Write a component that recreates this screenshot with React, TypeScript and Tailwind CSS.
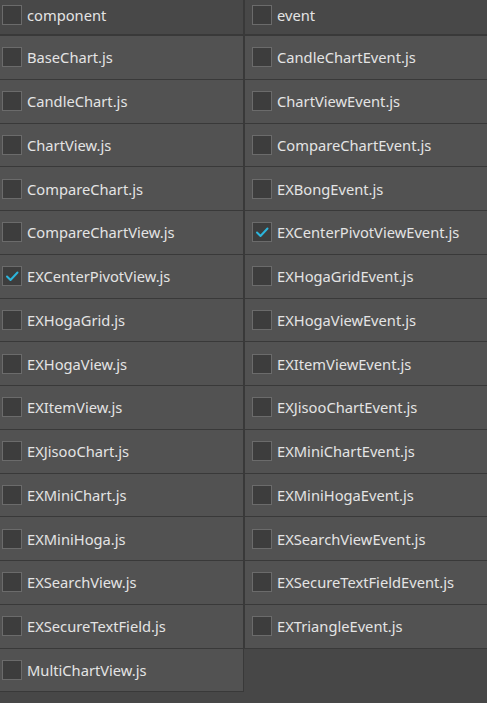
const leftFiles = [
  "BaseChart.js",
  "CandleChart.js",
  "ChartView.js",
  "CompareChart.js",
  "CompareChartView.js",
  "EXCenterPivotView.js",
  "EXHogaGrid.js",
  "EXHogaView.js",
  "EXItemView.js",
  "EXJisooChart.js",
  "EXMiniChart.js",
  "EXMiniHoga.js",
  "EXSearchView.js",
  "EXSecureTextField.js",
  "MultiChartView.js",
];

const rightFiles = [
  "CandleChartEvent.js",
  "ChartViewEvent.js",
  "CompareChartEvent.js",
  "EXBongEvent.js",
  "EXCenterPivotViewEvent.js",
  "EXHogaGridEvent.js",
  "EXHogaViewEvent.js",
  "EXItemViewEvent.js",
  "EXJisooChartEvent.js",
  "EXMiniChartEvent.js",
  "EXMiniHogaEvent.js",
  "EXSearchViewEvent.js",
  "EXSecureTextFieldEvent.js",
  "EXTriangleEvent.js",
];

const checked = new Set(["EXCenterPivotView.js", "EXCenterPivotViewEvent.js"]);

function Box({ on }: { on: boolean }) {
  return (
    <span className="flex h-5 w-5 shrink-0 items-center justify-center border border-[#6b6b6b] bg-[#3d3d3d]">
      {on && (
        <svg width="14" height="14" viewBox="0 0 14 14" fill="none">
          <path
            d="M2 7.5 L5.5 11 L12.5 3.5"
            stroke="#2cb5dc"
            strokeWidth="2"
            strokeLinecap="round"
            strokeLinejoin="round"
          />
        </svg>
      )}
    </span>
  );
}

function Cell({ name, side, head }: { name: string; side: "l" | "r"; head?: boolean }) {
  return (
    <div
      className={`flex items-center gap-[5px] ${
        head ? "h-[36px] border-b-2 bg-[#484848] pb-[4px]" : "h-[43.75px] border-b bg-[#525252]"
      } ${side === "l" ? "border-r pl-[2px]" : "border-l pl-[7px]"} border-[#393939]`}
    >
      <Box on={checked.has(name)} />
      <span className="whitespace-nowrap text-[14.7px] text-[#e4e4e4]">{name}</span>
    </div>
  );
}

export default function App() {
  return (
    <div
      className="flex h-[703px] w-[487px] overflow-hidden bg-[#474747]"
      style={{ fontFamily: '"Noto Sans", "Open Sans", sans-serif' }}
    >
      <div className="flex w-[244px] flex-col">
        <Cell name="component" side="l" head />
        {leftFiles.map((f) => (
          <Cell key={f} name={f} side="l" />
        ))}
      </div>
      <div className="flex flex-1 flex-col">
        <Cell name="event" side="r" head />
        {rightFiles.map((f) => (
          <Cell key={f} name={f} side="r" />
        ))}
      </div>
    </div>
  );
}
